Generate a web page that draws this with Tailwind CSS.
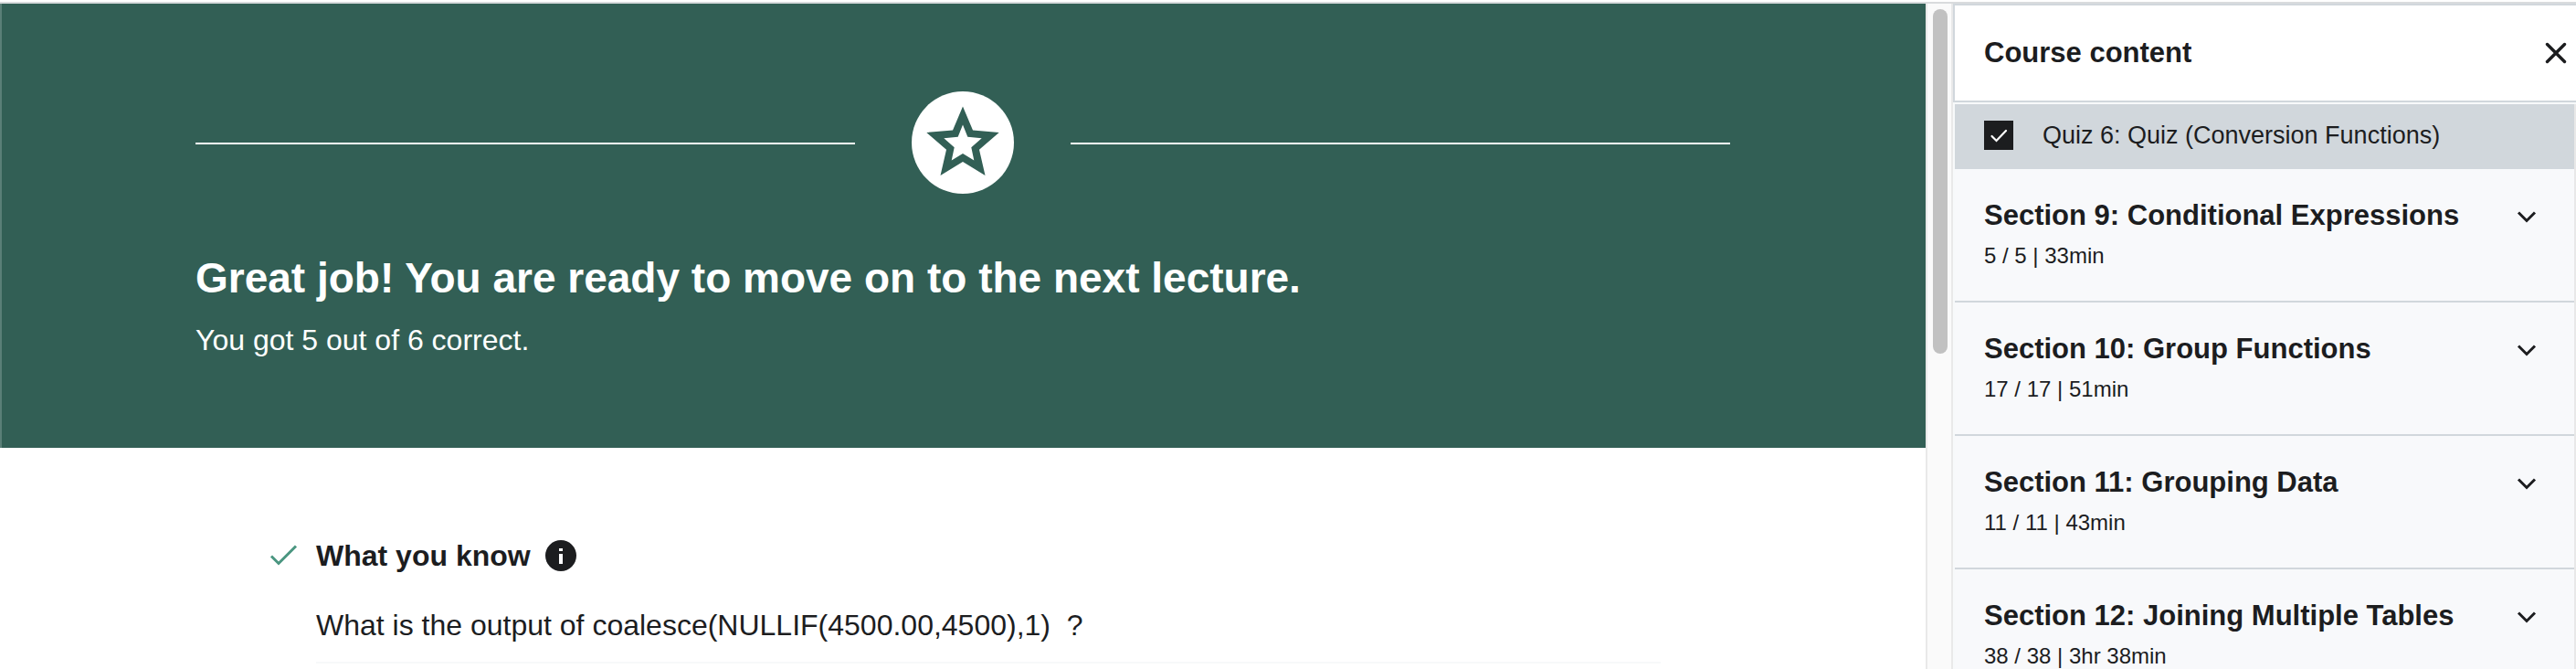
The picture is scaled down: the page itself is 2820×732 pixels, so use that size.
<!DOCTYPE html>
<html lang="en">
<head>
<meta charset="utf-8">
<meta name="viewport" content="width=device-width, initial-scale=1">
<title>Quiz results</title>
<script src="https://cdn.jsdelivr.net/npm/@tailwindcss/browser@4"></script>
</head>
<body class="bg-white font-['Liberation_Sans',Arial,sans-serif] text-[#1c1d1f]">
<div class="flex h-screen flex-col overflow-hidden pt-0.5">
  <div class="h-0.5 shrink-0 bg-[#d9dbdd]"></div>
  <div class="flex min-h-0 flex-1">
    <main class="min-w-0 flex-1 overflow-hidden">
      <!-- Result banner -->
      <section class="border-l-2 border-[#5a7f77] bg-[#325f55] pt-24 pr-0.5 pb-[94px] text-white">
        <div class="mx-auto max-w-[1680px]">
          <div class="flex items-center gap-[62px]">
            <div class="mt-0.5 h-0.5 flex-1 bg-white"></div>
            <svg class="size-28 shrink-0" viewBox="0 0 112 112" aria-hidden="true">
              <circle cx="56" cy="56" r="56" fill="#fff"/>
              <path fill="#325f55" fill-rule="evenodd" d="M56 16.5 67 42.4 95.7 45 74 63.7 80.5 92 56 77 31.5 92 38 63.7 16.3 45 45 42.4ZM56 36.5 50.7 49.8 35.3 51.2 46.7 61.2 43.7 75.4 56 68 68.3 75.4 65.3 61.2 76.7 51.2 61.3 49.8Z"/>
            </svg>
            <div class="mt-0.5 h-0.5 flex-1 bg-white"></div>
          </div>
          <h1 class="mt-16 text-[46px] leading-14 font-bold">Great job! You are ready to move on to the next lecture.</h1>
          <p class="mt-4 text-[32px] leading-12">You got 5 out of 6 correct.</p>
        </div>
      </section>
      <!-- Answer summary -->
      <section class="mx-auto grid max-w-[1528px] grid-cols-[56px_1fr] pt-[94px]">
        <svg class="mt-1 size-10" viewBox="0 0 40 40" fill="none" aria-hidden="true">
          <path d="M7 20.5 15 28.5 34 9.5" stroke="#4a9680" stroke-width="3"/>
        </svg>
        <div>
          <div class="flex items-center gap-4">
            <h2 class="text-[32px] leading-12 font-bold">What you know</h2>
            <button type="button" aria-label="More information">
              <svg class="size-[34px]" viewBox="0 0 34 34" aria-hidden="true">
                <circle cx="17" cy="17" r="17" fill="#1c1d1f"/>
                <path fill="#fff" d="M15 9h4v3h-4zM15 15h4v11h-4z"/>
              </svg>
            </button>
          </div>
          <p class="mt-7 border-b-2 border-[#f7f9fa] pb-4 text-[32px] leading-12">What is the output of coalesce(NULLIF(4500.00,4500),1)&nbsp; ?</p>
        </div>
      </section>
    </main>
    <!-- Scroll track -->
    <div class="w-[30px] shrink-0 border-x-2 border-[#e9e9e9] bg-[#fafafa] px-1.5 pt-1.5" aria-hidden="true">
      <div class="h-[377px] w-4 rounded-full bg-[#c1c1c1]"></div>
    </div>
    <aside class="flex w-[682px] shrink-0 flex-col overflow-hidden bg-[#f7f9fa]">
      <header class="flex h-[108px] shrink-0 items-center justify-between border-y-2 border-l-2 border-[#d1d7dc] bg-white pr-1.5 pl-8">
        <h2 class="text-[31px] leading-10 font-bold">Course content</h2>
        <button type="button" aria-label="Close">
          <svg class="size-8" viewBox="0 0 32 32" fill="none" aria-hidden="true">
            <path d="M6.5 6.5 25.5 25.5M25.5 6.5 6.5 25.5" stroke="#1c1d1f" stroke-width="3.4" stroke-linecap="round"/>
          </svg>
        </button>
      </header>
      <div class="mt-0.5 ml-0.5 border-r-2 border-[#e8e8e8] bg-[#f8f9fb]">
        <label class="flex h-[71px] items-center gap-8 bg-[#d1d7dc] pb-1 pl-8">
          <span class="grid size-8">
            <input type="checkbox" checked class="col-start-1 row-start-1 size-8 appearance-none bg-[#1c1d1f]">
            <svg class="pointer-events-none col-start-1 row-start-1 size-8" viewBox="0 0 32 32" fill="none" aria-hidden="true">
              <path d="M8.5 17 13.5 22 24 11" stroke="#fff" stroke-width="2.2" stroke-linecap="round"/>
            </svg>
          </span>
          <span class="text-[27px] leading-10">Quiz 6: Quiz (Conversion Functions)</span>
        </label>
        <button type="button" class="flex w-full items-start justify-between border-b-2 border-[#d1d7dc] p-8 pr-[38px] text-left">
          <span>
            <span class="block text-[31px] leading-[38px] font-bold">Section 9: Conditional Expressions</span>
            <span class="mt-2 block text-2xl leading-[34px]">5 / 5 | 33min</span>
          </span>
          <svg class="mt-1 h-8 w-7" viewBox="0 0 28 32" fill="none" aria-hidden="true"><path d="M5 11.5 14 20.5 23 11.5" stroke="#1c1d1f" stroke-width="3"/></svg>
        </button>
        <button type="button" class="flex w-full items-start justify-between border-b-2 border-[#d1d7dc] p-8 pr-[38px] text-left">
          <span>
            <span class="block text-[31px] leading-[38px] font-bold">Section 10: Group Functions</span>
            <span class="mt-2 block text-2xl leading-[34px]">17 / 17 | 51min</span>
          </span>
          <svg class="mt-1 h-8 w-7" viewBox="0 0 28 32" fill="none" aria-hidden="true"><path d="M5 11.5 14 20.5 23 11.5" stroke="#1c1d1f" stroke-width="3"/></svg>
        </button>
        <button type="button" class="flex w-full items-start justify-between border-b-2 border-[#d1d7dc] p-8 pr-[38px] text-left">
          <span>
            <span class="block text-[31px] leading-[38px] font-bold">Section 11: Grouping Data</span>
            <span class="mt-2 block text-2xl leading-[34px]">11 / 11 | 43min</span>
          </span>
          <svg class="mt-1 h-8 w-7" viewBox="0 0 28 32" fill="none" aria-hidden="true"><path d="M5 11.5 14 20.5 23 11.5" stroke="#1c1d1f" stroke-width="3"/></svg>
        </button>
        <button type="button" class="flex w-full items-start justify-between border-b-2 border-[#d1d7dc] p-8 pr-[38px] text-left">
          <span>
            <span class="block text-[31px] leading-[38px] font-bold">Section 12: Joining Multiple Tables</span>
            <span class="mt-2 block text-2xl leading-[34px]">38 / 38 | 3hr 38min</span>
          </span>
          <svg class="mt-1 h-8 w-7" viewBox="0 0 28 32" fill="none" aria-hidden="true"><path d="M5 11.5 14 20.5 23 11.5" stroke="#1c1d1f" stroke-width="3"/></svg>
        </button>
      </div>
    </aside>
  </div>
</div>
</body>
</html>
